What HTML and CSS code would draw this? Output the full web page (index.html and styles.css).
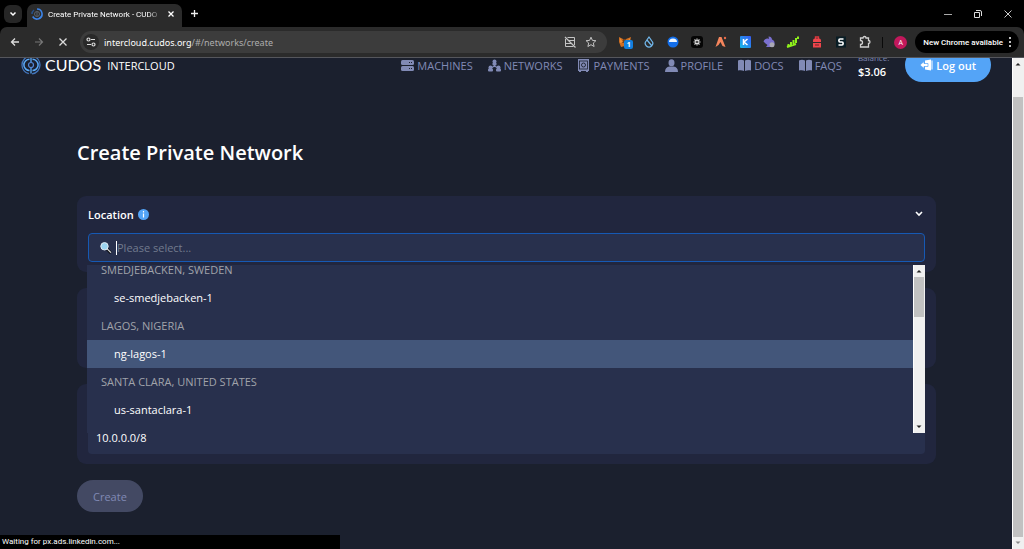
FILE: index.html
```html
<!DOCTYPE html>
<html lang="en">
<head>
    <meta charset="UTF-8">
    <title>Create Private Network - CUDOS Intercloud</title>
    <link rel="stylesheet" href="styles.css">
</head>
<body>

<!-- browser tabs -->
<div class="tabs">
    <button class="tab-search" aria-label="Search tabs"><svg width="8" height="8" viewBox="0 0 8 8"><path d="M1.5 2.5L4 5l2.500-2.500" fill="none" stroke="#fff" stroke-width="1.500"/></svg></button>
    <div class="tab">
        <svg width="12" height="12" viewBox="0 0 12 12" fill="none"><path d="M6 1a5 5 0 1 1-4.300 7.500" stroke="#3c83e6" stroke-width="1.600"/><path d="M1 6a5 5 0 0 1 2-4" stroke="#275088" stroke-width="1.500"/><circle cx="6" cy="6" r="2.500" stroke="#59636f"/><path d="M6 4v4" stroke="#59636f"/></svg>
        <span class="tab-title">Create Private Network - CUDO</span>
        <button class="plain" aria-label="Close tab"><svg width="8" height="8" viewBox="0 0 8 8"><path d="M1.500 1.500l5 5M6.500 1.500l-5 5" stroke="#fff" stroke-width="1.300"/></svg></button>
    </div>
    <button class="plain new-tab" aria-label="New tab"><svg width="9" height="9" viewBox="0 0 9 9"><path d="M4.500 1v7M1 4.500h7" stroke="#eee" stroke-width="1.300"/></svg></button>
    <div class="window-buttons">
        <button class="plain" aria-label="Minimize"><svg width="10" height="10" viewBox="0 0 10 10"><path d="M1 5.500h8" stroke="#aaa"/></svg></button>
        <button class="plain" aria-label="Restore"><svg width="10" height="10" viewBox="0 0 10 10" fill="none" stroke="#ddd"><path d="M1.500 3.500h5v5h-5zM3 1.500h4a1.500 1.500 0 0 1 1.500 1.500v4"/></svg></button>
        <button class="plain" aria-label="Close"><svg width="10" height="10" viewBox="0 0 10 10"><path d="M1.500 1.500l7 7M8.500 1.500l-7 7" stroke="#ccc"/></svg></button>
    </div>
</div>

<!-- browser toolbar -->
<div class="toolbar">
    <div class="history">
        <button class="plain" aria-label="Back"><svg width="10" height="10" viewBox="0 0 10 10"><path d="M9 5H1.500M5 1.500L1.500 5 5 8.500" fill="none" stroke="#ddd" stroke-width="1.300"/></svg></button>
        <button class="plain" aria-label="Forward"><svg width="10" height="10" viewBox="0 0 10 10"><path d="M1 5h7.500M5 1.500L8.500 5 5 8.500" fill="none" stroke="#777" stroke-width="1.200"/></svg></button>
        <button class="plain" aria-label="Stop"><svg width="10" height="10" viewBox="0 0 10 10"><path d="M1.500 1.500l7 7M8.500 1.500l-7 7" stroke="#ddd" stroke-width="1.300"/></svg></button>
    </div>
    <div class="address">
        <span class="site-info"><svg width="10" height="10" viewBox="0 0 10 10" fill="none" stroke="#ddd" stroke-width="1.200"><circle cx="2.500" cy="2.500" r="1.500"/><path d="M5 2.500h4M1 7.500h4"/><circle cx="7.500" cy="7.500" r="1.500"/></svg></span>
        <span class="url"><b>intercloud.cudos.org</b>/#/networks/create</span>
        <svg width="12" height="12" viewBox="0 0 12 12" fill="none" stroke="#c4c4c4"><path d="M3.500 1.500h7v7.500M9.500 10.500h-8V3M4.500 4.500h6M1.500 7.500h5.500"/><path d="M1 1l10.500 10.500" stroke-width="1.300"/></svg>
        <svg width="12" height="12" viewBox="0 0 12 12" fill="none" stroke="#c4c4c4"><path d="M6 1.200l1.400 3.200 3.500.3-2.600 2.300.8 3.500L6 8.700l-3.100 1.800.8-3.500L1.100 4.700l3.500-.3z"/></svg>
    </div>
    <div class="extensions">
        <span class="ext"><svg width="14" height="14" viewBox="0 0 14 14"><path d="M1 2l4 2h3l5-2-1 5-1 5-4-1-4 1-2-5z" fill="#ce6e22"/><path d="M5 4h3l1 4H4z" fill="#7a4318"/><path d="M2 3l3 4-3 1zM12 3L9 7l3 1z" fill="#f09237"/></svg><i class="count">1</i></span>
        <svg width="14" height="14" viewBox="0 0 14 14" fill="none" stroke="#72b8ec" stroke-width="1.200"><path d="M7 2l2.700 3.800a3.700 3.700 0 1 1-5.400 0zM5 5l4.500 5.500"/></svg>
        <svg width="14" height="14" viewBox="0 0 14 14"><circle cx="7" cy="7" r="5.500" fill="#126eea"/><path d="M3 7a4 3.500 0 0 1 8 0z" fill="#eef6ff"/></svg>
        <svg width="14" height="14" viewBox="0 0 14 14"><rect x="1" y="1" width="12" height="12" rx="3" fill="#050505"/><path d="M7 3.500v7M3.500 7h7M4.500 4.500l5 5M9.500 4.500l-5 5" stroke="#ddd" stroke-width="1.100"/><circle cx="7" cy="7" r="1" fill="#222"/></svg>
        <svg width="14" height="14" viewBox="0 0 14 14"><path d="M1.500 12L5 2h2.500L11.500 12l-3-1-2-4-2 3z" fill="#f5855c"/><circle cx="11" cy="3" r="1.200" fill="#e66b49"/></svg>
        <svg width="14" height="14" viewBox="0 0 14 14"><defs><linearGradient id="kg" x1="0" y1="1" x2="1" y2="0"><stop offset="0" stop-color="#16bce8"/><stop offset="1" stop-color="#3658f2"/></linearGradient></defs><rect x="2" y="1" width="11" height="12" rx="1" fill="url(#kg)"/><path d="M5.500 4v6M9.500 4L6 7l3.500 3" fill="none" stroke="#fff" stroke-width="1.500"/></svg>
        <svg width="14" height="14" viewBox="0 0 14 14"><path d="M1.500 6.500C3 3.500 5 3 7 4L6.500 1.500C9 1.500 10 3 10 4.500c2 .5 3 2.500 2.500 5L9 12H4l1.500-2-2-1.500z" fill="#7a70cf"/><circle cx="10" cy="9.800" r="2.500" fill="#aaa9b4"/></svg>
        <svg width="14" height="14" viewBox="0 0 14 14" fill="none" stroke="#8ef01b" stroke-width="2"><path d="M2.500 11V9M5 11V7M7.500 10V5M10 8V3M12 4V1.500M1 12l9-3"/></svg>
        <svg width="14" height="14" viewBox="0 0 14 14"><path d="M5.500 4V2h3v2" fill="none" stroke="#dd383e" stroke-width="1.400"/><path d="M3 5.500a2 2 0 0 1 2-2h4a2 2 0 0 1 2 2V7H3zM3 8h8v4.500H3z" fill="#ee454b"/><path d="M5 10h4" stroke="#702026"/></svg>
        <svg width="14" height="14" viewBox="0 0 14 14"><path d="M2 1.500h10v11H2z" fill="#091d25"/><path d="M9.500 4H6C4.500 4 4.500 7 6 7h2c1.500 0 1.500 3 0 3H4.500" fill="none" stroke="#fff" stroke-width="1.700"/></svg>
        <svg width="14" height="14" viewBox="0 0 14 14" fill="none" stroke="#d0d0d0" stroke-width="1.300"><path d="M2.500 3H5a1.500 1.500 0 0 1 3 0h2.500v2.500a1.500 1.500 0 0 1 0 3V12h-8V9.500a1.700 1.700 0 0 0 0-4z"/></svg>
    </div>
    <span class="divider"></span>
    <span class="avatar">A</span>
    <button class="update">New Chrome available <svg width="4" height="12" viewBox="0 0 4 12" fill="#fff"><circle cx="2" cy="2" r="1"/><circle cx="2" cy="6" r="1"/><circle cx="2" cy="10" r="1"/></svg></button>
</div>

<div class="view">
    <div class="page">
        <header class="header">
            <a class="logo" href="#">
                <svg width="20" height="20" viewBox="0 0 20 20" fill="none"><circle cx="10" cy="10" r="9" stroke="#4376bd" stroke-width="1.300" stroke-dasharray="25 3.270" stroke-dashoffset="12"/><path d="M8.500 4.300a5.500 5.500 0 0 0 0 11.200M11.500 4.300a5.500 5.500 0 0 1 0 11.200" stroke="#5aa9f7" stroke-width="1.500"/><path d="M10 1.500v6M10 12.500v6" stroke="#5aa9f7" stroke-width="1.300"/><circle cx="10" cy="10" r="2.500" stroke="#5287d6" stroke-width="1.200"/></svg>
                <span class="brand">CUDOS</span>
                <span class="product">INTERCLOUD</span>
            </a>
            <nav class="nav">
                <a href="#"><svg width="13" height="13" viewBox="0 0 13 13"><rect y="1" width="13" height="5" rx="1.500" fill="#818ab5"/><rect y="7" width="13" height="5" rx="1.500" fill="#818ab5"/><path d="M8 3.500h1M10 3.500h1M8 9.500h1M10 9.500h1" stroke="#1b202e"/></svg>MACHINES</a>
                <a href="#"><svg width="13" height="13" viewBox="0 0 13 13"><path d="M6.500 4v4M6.500 7L3 9M6.500 7l3.500 2" stroke="#818ab5" stroke-width="1.200"/><g fill="#818ab5"><circle cx="6.500" cy="2.500" r="2"/><rect x="4.500" y="3.500" width="4" height="3" rx="1"/><circle cx="2.500" cy="8.500" r="2"/><rect x="0" y="9.500" width="5" height="3" rx="1"/><circle cx="10.500" cy="8.500" r="2"/><rect x="8" y="9.500" width="5" height="3" rx="1"/></g></svg>NETWORKS</a>
                <a href="#"><svg width="13" height="13" viewBox="0 0 13 13"><path d="M1 0h11v12H1zM2 12h2v1H2zM9 12h2v1H9z" fill="#818ab5"/><rect x="2.500" y="2" width="8" height="8" fill="none" stroke="#1b202e" stroke-width=".8"/><circle cx="6.500" cy="6" r="2" fill="none" stroke="#1b202e" stroke-width=".9"/></svg>PAYMENTS</a>
                <a href="#"><svg width="13" height="13" viewBox="0 0 13 13" fill="#818ab5"><ellipse cx="6.500" cy="3.700" rx="3" ry="3.500"/><path d="M0 13c0-3.500 1.500-5 4.500-5.500h4c3 .5 4.500 2 4.500 5.500z"/></svg>PROFILE</a>
                <a href="#"><svg width="13" height="13" viewBox="0 0 13 13" fill="#818ab5"><path d="M0 1.500c2-1 4-1 6 0V12c-2-1-4-1-6-.5zM7 1.500c2-1 4-1 6 0v10c-2-.5-4-.5-6 .5z"/></svg>DOCS</a>
                <a href="#"><svg width="13" height="13" viewBox="0 0 13 13" fill="#818ab5"><path d="M0 1.500c2-1 4-1 6 0V12c-2-1-4-1-6-.5zM7 1.500c2-1 4-1 6 0v10c-2-.5-4-.5-6 .5z"/></svg>FAQS</a>
            </nav>
            <div class="balance"><span>Balance:</span><strong>$3.06</strong></div>
            <button class="logout"><svg width="13" height="12" viewBox="0 0 13 12"><path d="M5 1.500L11 .5v11L5 10.500z" fill="#fff"/><path d="M0 6l4-3.500v2h4v3H4v2z" fill="#fff" stroke="#54a4f7" stroke-width=".7"/><path d="M12 1.500v9" stroke="#fff"/></svg>Log out</button>
        </header>

        <main class="content">
            <h1>Create Private Network</h1>
            <form>
                <section class="card location">
                    <div class="card-head">
                        <label for="location">Location</label>
                        <svg width="11" height="11" viewBox="0 0 11 11"><circle cx="5.500" cy="5.500" r="5.500" fill="#54a4f7"/><path d="M5.500 2v1.500M5.500 4.500v4" stroke="#fff" stroke-width="1.200"/></svg>
                        <svg class="chevron" width="10" height="8" viewBox="0 0 10 8"><path d="M2 2l3 3 3-3" fill="none" stroke="#fff" stroke-width="1.600"/></svg>
                    </div>
                    <div class="search">
                        <svg width="12" height="12" viewBox="0 0 12 12"><path d="M7 7l4 4" stroke="#101218" stroke-width="3"/><path d="M7.200 6.800l3.800 3.800" stroke="#e7e7e7" stroke-width="1.200"/><circle cx="4.500" cy="4.300" r="3.700" fill="#9bd3ef" stroke="#e3eaf0"/></svg>
                        <span class="caret"></span>
                        <input type="text" id="location" placeholder="Please select..." autocomplete="off">
                    </div>
                    <div class="dropdown">
                        <div class="options" role="listbox" aria-label="Location">
                            <div class="group">SMEDJEBACKEN, SWEDEN</div>
                            <div class="option" role="option">se-smedjebacken-1</div>
                            <div class="group">LAGOS, NIGERIA</div>
                            <div class="option active" role="option" aria-selected="true">ng-lagos-1</div>
                            <div class="group">SANTA CLARA, UNITED STATES</div>
                            <div class="option" role="option">us-santaclara-1</div>
                        </div>
                        <div class="scrollbar">
                            <svg width="12" height="12" viewBox="0 0 12 12"><path d="M3.500 7.500L6 5l2.500 2.500z" fill="#222"/></svg>
                            <span class="thumb"></span>
                            <svg width="12" height="12" viewBox="0 0 12 12"><path d="M3.500 4.500h5L6 7z" fill="#222"/></svg>
                        </div>
                    </div>
                </section>
                <section class="card"></section>
                <section class="card">
                    <input type="text" class="field" value="10.0.0.0/8" aria-label="IP range">
                </section>
                <button type="submit" class="create" disabled>Create</button>
            </form>
        </main>
        <div class="status">Waiting for px.ads.linkedin.com...</div>
    </div>
    <div class="scrollbar page-scroll">
        <svg width="12" height="12" viewBox="0 0 12 12"><path d="M3.500 7.500L6 5l2.500 2.500z" fill="#222"/></svg>
        <span class="thumb"></span>
        <svg width="12" height="12" viewBox="0 0 12 12"><path d="M3.500 4.500h5L6 7z" fill="#888"/></svg>
    </div>
</div>

</body>
</html>
```
FILE: styles.css
```css
* {
    box-sizing: border-box;
    margin: 0;
    padding: 0;
}

body {
    display: flex;
    flex-direction: column;
    height: 100vh;
    overflow: hidden;
    background: #000;
    color: #fff;
    font-family: "Open Sans", "Noto Sans", sans-serif;
    font-size: 11px;
}

svg {
    display: block;
    flex: none;
}

a {
    color: inherit;
    text-decoration: none;
}

button,
input {
    font: inherit;
    color: inherit;
    border: 0;
    outline: 0;
    background: none;
}

.plain {
    display: flex;
}

/* tabs */
.tabs {
    display: flex;
    align-items: center;
    flex: none;
    height: 27px;
    padding: 0 11px 0 4px;
}

.tab-search {
    display: flex;
    align-items: center;
    justify-content: center;
    width: 18px;
    height: 18px;
    border-radius: 6px;
    background: #262626;
}

.tab {
    display: flex;
    align-items: center;
    align-self: flex-end;
    width: 155px;
    height: 23px;
    margin-left: 5px;
    padding: 0 7px 3px 4px;
    border-radius: 7px 7px 0 0;
    background: #2b2b2b;
}

.tab-title {
    flex: 1;
    min-width: 0;
    margin: 0 5px;
    overflow: hidden;
    white-space: nowrap;
    font-family: Roboto, sans-serif;
    font-size: 8px;
    -webkit-mask-image: linear-gradient(90deg, #000 88%, transparent);
    mask-image: linear-gradient(90deg, #000 88%, transparent);
}

.new-tab {
    margin-left: 8px;
}

.window-buttons {
    display: flex;
    gap: 20px;
    margin-left: auto;
}

/* toolbar */
.toolbar {
    display: flex;
    align-items: center;
    flex: none;
    height: 31px;
    padding: 0 5px 0 10px;
    border-bottom: 1px solid #55565c;
    border-radius: 7px 7px 0 0;
    background: #2b2b2b;
}

.history {
    display: flex;
    gap: 14px;
    margin-right: 12px;
}

.address {
    display: flex;
    align-items: center;
    flex: 1;
    gap: 9px;
    height: 22px;
    padding: 0 10px 0 3px;
    border-radius: 11px;
    background: #3c3c3c;
}

.site-info {
    display: flex;
    align-items: center;
    justify-content: center;
    width: 16px;
    height: 16px;
    border-radius: 50%;
    background: #292929;
}

.url {
    flex: 1;
    margin-left: -4px;
    color: #adadad;
    font-family: "Noto Sans", sans-serif;
    font-size: 9px;
}

.url b {
    color: #fff;
    font-weight: 400;
}

.extensions {
    display: flex;
    gap: 10px;
    margin-left: 11px;
}

.ext {
    position: relative;
}

.count {
    position: absolute;
    left: 6px;
    top: 5px;
    width: 9px;
    height: 9px;
    border-radius: 2px;
    background: #1180df;
    font-size: 7px;
    font-style: normal;
    font-weight: 700;
    line-height: 9px;
    text-align: center;
}

.divider {
    width: 1px;
    height: 11px;
    margin: 0 11px 0 10px;
    background: #0a0a0a;
}

.avatar {
    width: 13px;
    height: 13px;
    margin-right: 8px;
    border-radius: 50%;
    background: #c2185b;
    font-size: 7px;
    line-height: 13px;
    text-align: center;
}

.update {
    display: flex;
    align-items: center;
    gap: 5px;
    height: 22px;
    padding: 0 7px 0 8px;
    border-radius: 11px;
    background: #000;
    font-family: Roboto, sans-serif;
    font-size: 8px;
    font-weight: 500;
    white-space: nowrap;
}

/* page */
.view {
    display: flex;
    flex: 1;
    min-height: 0;
}

.page {
    position: relative;
    flex: 1;
    overflow: hidden;
    background: #1b202e;
}

.header {
    display: flex;
    align-items: center;
    gap: 16px;
    height: 48px;
    margin-top: -17px;
    padding: 0 21px;
}

.logo {
    display: flex;
    align-items: center;
}

.brand {
    margin: 0 6px 0 4px;
    font-family: Lato, sans-serif;
    font-size: 16px;
    line-height: 16px;
}

.product {
    font-weight: 500;
}

.nav {
    display: flex;
    gap: 15px;
    margin-left: auto;
    color: #818ab5;
}

.nav a {
    display: flex;
    align-items: center;
    gap: 3px;
}

.balance {
    display: flex;
    flex-direction: column;
    font-size: 8px;
    line-height: 14px;
    color: #818ab5;
}

.balance strong {
    color: #fff;
    font-size: 11px;
    font-weight: 600;
}

.logout {
    display: flex;
    align-items: center;
    gap: 3px;
    height: 34px;
    padding: 0 15px;
    border-radius: 17px;
    background: #54a4f7;
    font-weight: 600;
}

.content {
    padding: 49px 76px 0 77px;
}

h1 {
    margin-bottom: 29px;
    font-size: 20px;
    font-weight: 600;
    line-height: 29px;
}

.card {
    display: flex;
    flex-direction: column;
    justify-content: flex-end;
    min-height: 80px;
    margin-bottom: 16px;
    padding: 10px 11px;
    border-radius: 9px;
    background: #21263e;
}

.location {
    position: relative;
    min-height: 0;
}

.card-head {
    display: flex;
    align-items: center;
    gap: 4px;
    height: 16px;
    margin-bottom: 11px;
    font-weight: 600;
}

.chevron {
    margin-left: auto;
    margin-right: 1px;
}

.search {
    display: flex;
    align-items: center;
    height: 29px;
    padding: 0 11px;
    border: 1px solid #1659b4;
    border-radius: 4px;
    background: #28304d;
}

.caret {
    width: 1px;
    height: 14px;
    margin-left: 4px;
    background: #fff;
}

.search input {
    flex: 1;
    min-width: 0;
}

.search input::placeholder {
    color: #727b8e;
}

.dropdown {
    position: absolute;
    top: 69px;
    left: 10px;
    right: 11px;
    z-index: 2;
    display: flex;
    height: 168px;
    background: #28304d;
}

.options {
    flex: 1;
    overflow: hidden;
    line-height: 28px;
}

.options .group:first-child {
    margin-top: -9px;
}

.group {
    padding-left: 14px;
    color: #a0a3aa;
}

.option {
    padding-left: 27px;
}

.option.active {
    background: #43567a;
}

.scrollbar {
    display: flex;
    flex-direction: column;
    flex: none;
    width: 12px;
    border-left: 1px solid #fff;
    background: #f0f0f0;
}

.scrollbar .thumb {
    height: 40px;
    margin: 0 1px 0 0;
    background: #c1c1c1;
}

.scrollbar svg {
    margin-left: -1px;
}

.scrollbar svg:last-child {
    margin-top: auto;
}

.page-scroll .thumb {
    flex: 1;
    margin-top: 27px;
}

.field {
    width: 100%;
    height: 29px;
    padding: 0 8px 5px;
    border-radius: 4px;
    background: #28304d;
}

.create {
    height: 32px;
    padding: 0 16px;
    border-radius: 16px;
    background: #434963;
    color: #818ab5;
}

.status {
    position: absolute;
    left: 0;
    bottom: 0;
    width: 340px;
    height: 14px;
    padding-left: 2px;
    background: #000;
    font-family: Roboto, sans-serif;
    font-size: 8px;
    line-height: 14px;
}
```
